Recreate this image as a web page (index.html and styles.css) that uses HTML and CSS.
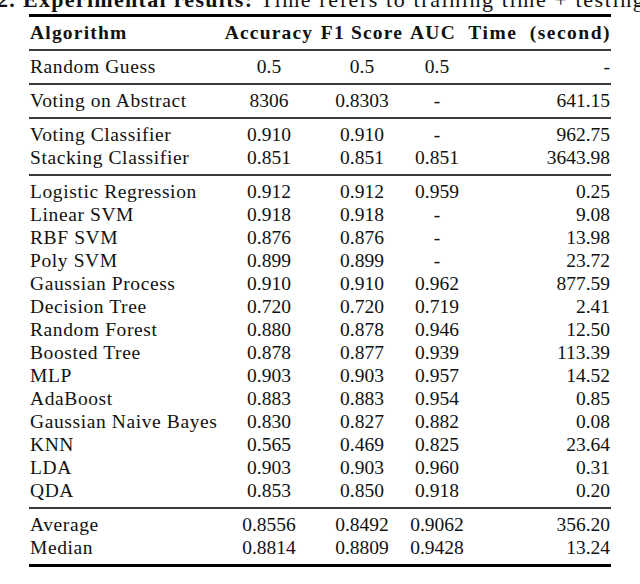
FILE: index.html
```html
<!DOCTYPE html>
<html lang="en">
<head>
<meta charset="utf-8">
<title>Experimental results</title>
<link rel="stylesheet" href="styles.css">
</head>
<body>
<div class="caption"><b>Table 2. Experimental results:</b> <span class="caption-text">Time refers to training time + testing time.</span></div>
<div class="table">
  <div class="rule-heavy rule-top"></div>
  <div class="row head"><span class="name">Algorithm</span><span>Accuracy</span><span>F1 Score</span><span class="auc">AUC</span><span class="time">Time (second)</span></div>
  <div class="rule"></div>
  <div class="row"><span class="name">Random Guess</span><span>0.5</span><span>0.5</span><span>0.5</span><span class="time">-</span></div>
  <div class="rule"></div>
  <div class="row"><span class="name">Voting on Abstract</span><span>8306</span><span>0.8303</span><span>-</span><span class="time">641.15</span></div>
  <div class="rule"></div>
  <div class="row"><span class="name">Voting Classifier</span><span>0.910</span><span>0.910</span><span>-</span><span class="time">962.75</span></div>
  <div class="row"><span class="name">Stacking Classifier</span><span>0.851</span><span>0.851</span><span>0.851</span><span class="time">3643.98</span></div>
  <div class="rule"></div>
  <div class="row"><span class="name">Logistic Regression</span><span>0.912</span><span>0.912</span><span>0.959</span><span class="time">0.25</span></div>
  <div class="row"><span class="name">Linear SVM</span><span>0.918</span><span>0.918</span><span>-</span><span class="time">9.08</span></div>
  <div class="row"><span class="name">RBF SVM</span><span>0.876</span><span>0.876</span><span>-</span><span class="time">13.98</span></div>
  <div class="row"><span class="name">Poly SVM</span><span>0.899</span><span>0.899</span><span>-</span><span class="time">23.72</span></div>
  <div class="row"><span class="name">Gaussian Process</span><span>0.910</span><span>0.910</span><span>0.962</span><span class="time">877.59</span></div>
  <div class="row"><span class="name">Decision Tree</span><span>0.720</span><span>0.720</span><span>0.719</span><span class="time">2.41</span></div>
  <div class="row"><span class="name">Random Forest</span><span>0.880</span><span>0.878</span><span>0.946</span><span class="time">12.50</span></div>
  <div class="row"><span class="name">Boosted Tree</span><span>0.878</span><span>0.877</span><span>0.939</span><span class="time">113.39</span></div>
  <div class="row"><span class="name">MLP</span><span>0.903</span><span>0.903</span><span>0.957</span><span class="time">14.52</span></div>
  <div class="row"><span class="name">AdaBoost</span><span>0.883</span><span>0.883</span><span>0.954</span><span class="time">0.85</span></div>
  <div class="row"><span class="name">Gaussian Naive Bayes</span><span>0.830</span><span>0.827</span><span>0.882</span><span class="time">0.08</span></div>
  <div class="row"><span class="name">KNN</span><span>0.565</span><span>0.469</span><span>0.825</span><span class="time">23.64</span></div>
  <div class="row"><span class="name">LDA</span><span>0.903</span><span>0.903</span><span>0.960</span><span class="time">0.31</span></div>
  <div class="row"><span class="name">QDA</span><span>0.853</span><span>0.850</span><span>0.918</span><span class="time">0.20</span></div>
  <div class="rule"></div>
  <div class="row"><span class="name">Average</span><span>0.8556</span><span>0.8492</span><span>0.9062</span><span class="time">356.20</span></div>
  <div class="row"><span class="name">Median</span><span>0.8814</span><span>0.8809</span><span>0.9428</span><span class="time">13.24</span></div>
  <div class="rule-heavy rule-bottom"></div>
</div>
</body>
</html>
```

FILE: styles.css
```css
html, body {
  margin: 0;
  padding: 0;
  background: #ffffff;
  overflow: hidden;
}

body {
  width: 640px;
  height: 584px;
  font-family: "Liberation Serif", "Times New Roman", serif;
  color: #111111;
}

.caption {
  line-height: 0;
  white-space: nowrap;
  font-size: 22px;
  letter-spacing: 1.3px;
  margin-left: -68px;
}

.caption b {
  font-weight: bold;
}

.caption-text {
  letter-spacing: 1.6px;
}

.table {
  margin-left: 29px;
  padding-top: 14px;
  width: 582px;
  font-size: 19.5px;
  line-height: 23px;
}

.rule-heavy {
  height: 3px;
  background: #000000;
}

.rule-top {
  margin-bottom: 4px;
}

.rule-bottom {
  margin-top: 5px;
}

.rule {
  height: 2px;
  background: #3a3a3a;
  margin: 5px 0 4px;
}

.row {
  display: grid;
  grid-template-columns: 193px 94px 92px 58px 145px;
  height: 23px;
  white-space: nowrap;
}

.row > span {
  justify-self: center;
}

.row > .name {
  justify-self: start;
  padding-left: 1px;
  letter-spacing: 0.6px;
}

.row > .time {
  justify-self: end;
  padding-right: 1px;
}

.head {
  font-weight: bold;
  letter-spacing: 1.2px;
}

.head > .name {
  letter-spacing: 1.2px;
}

.head .auc {
  margin-right: 8px;
}

.head .time {
  letter-spacing: 1.5px;
  word-spacing: 6px;
  padding-right: 0;
}
```
